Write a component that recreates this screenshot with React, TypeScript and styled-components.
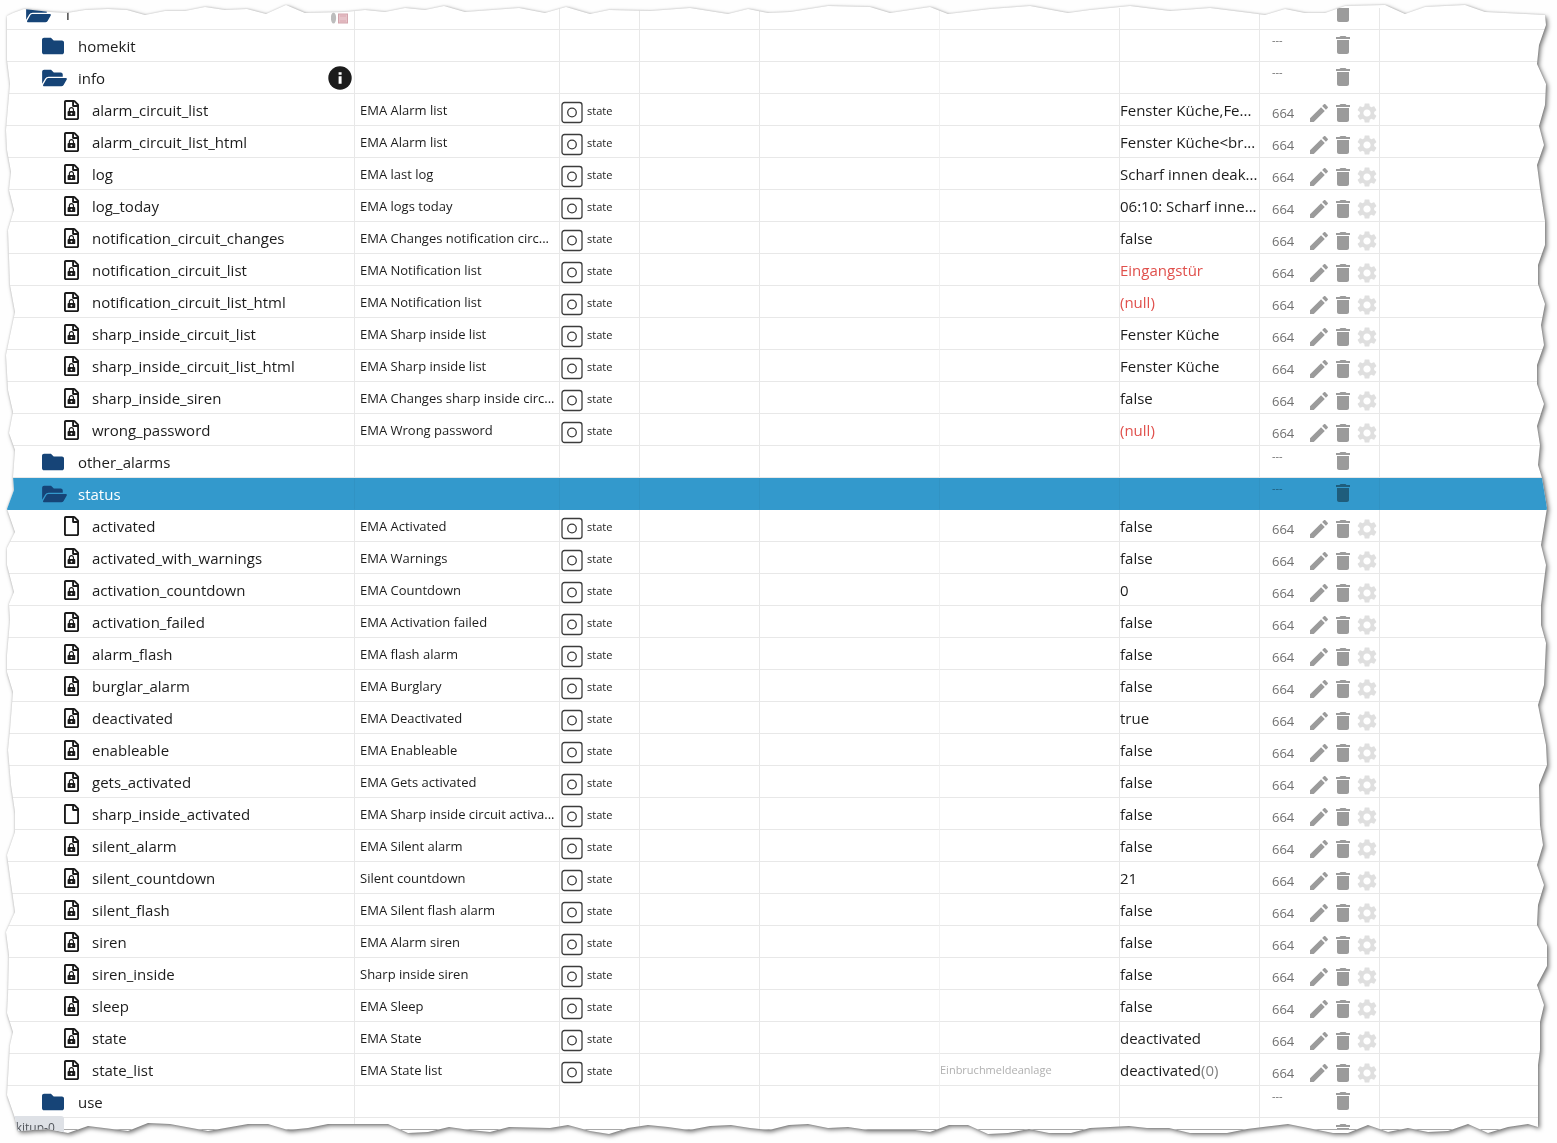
import React from "react";
import styled, { createGlobalStyle, css } from "styled-components";

const GlobalStyle = createGlobalStyle`
  body {
    margin: 0;
    background: #fefefe;
    color: #1c1c1c;
    font-family: "Open Sans", "Noto Sans", sans-serif;
  }
`;

/* Torn paper outline: top/bottom x are spread over the width, sides keep their distance to the edge. */
type Point = [number, number];
const SPAN = 1557;
const TOP: Point[] = [
  [7, 16], [13, 13], [24, 9], [50, 12], [67, 13], [85, 10], [108, 9], [127, 10], [145, 15], [165, 11], [185, 11],
  [205, 7], [225, 10], [247, 9], [266, 14], [286, 5], [305, 13], [345, 12], [365, 10], [385, 12], [405, 8],
  [425, 10], [444, 6], [465, 12], [519, 8], [545, 13], [566, 7], [590, 14], [609, 10], [650, 11], [690, 8],
  [728, 14], [748, 9], [768, 13], [790, 12], [828, 6], [870, 7], [890, 13], [930, 7], [948, 14], [990, 9],
  [1030, 6], [1068, 13], [1090, 10], [1130, 6], [1170, 11], [1210, 8], [1250, 13], [1265, 15], [1285, 9],
  [1305, 13], [1325, 13], [1345, 6], [1385, 5], [1405, 14], [1425, 7], [1465, 5], [1485, 12], [1545, 15],
];
const RIGHT: Point[] = [
  [11, 25], [18, 45], [20, 64], [11, 84], [12, 105], [18, 126], [13, 145], [20, 165], [17, 188], [12, 221],
  [12, 245], [19, 265], [19, 284], [12, 304], [16, 325], [13, 345], [20, 365], [20, 384], [13, 404], [20, 426],
  [17, 445], [19, 465], [15, 478], [10, 508], [16, 545], [11, 565], [16, 605], [16, 625], [11, 643], [13, 685],
  [19, 705], [11, 745], [10, 765], [18, 785], [17, 825], [14, 845], [20, 865], [13, 885], [19, 905], [20, 925],
  [10, 945], [10, 966], [20, 985], [13, 1005], [17, 1022], [17, 1050], [19, 1065], [19, 1127],
];
const BOTTOM: Point[] = [
  [1528, 19], [1508, 16], [1488, 10], [1468, 19], [1448, 12], [1428, 11], [1408, 15], [1388, 11], [1368, 18],
  [1348, 10], [1333, 10], [1308, 15], [1288, 19], [1247, 14], [1227, 10], [1190, 10], [1169, 15], [1147, 15],
  [1129, 17], [1110, 16], [1090, 15], [1071, 10], [1049, 10], [1029, 14], [1008, 10], [988, 9], [968, 18],
  [949, 18], [930, 11], [915, 13], [868, 13], [848, 16], [828, 15], [808, 19], [789, 18], [769, 13], [750, 15],
  [731, 18], [710, 17], [689, 13], [668, 16], [648, 18], [628, 15], [609, 9], [590, 12], [568, 18], [550, 15],
  [509, 16], [490, 11], [470, 13], [449, 16], [428, 11], [408, 10], [388, 19], [328, 19], [308, 15], [288, 13],
  [268, 19], [248, 19], [208, 12], [170, 19], [148, 20], [128, 12], [88, 17], [68, 10], [48, 14], [18, 12],
];
const LEFT: Point[] = [
  [15, 1118], [7, 1095], [9, 1062], [10, 1045], [13, 1032], [7, 1013], [8, 995], [9, 955], [6, 932], [15, 912],
  [7, 855], [15, 832], [15, 812], [11, 785], [8, 750], [10, 730], [13, 692], [7, 672], [7, 655], [10, 620],
  [9, 604], [14, 592], [7, 565], [7, 548], [15, 532], [7, 509], [14, 490], [13, 477], [15, 450], [9, 433],
  [13, 412], [8, 390], [6, 355], [15, 312], [10, 285], [8, 230], [14, 210], [9, 190], [11, 172], [7, 150],
  [6, 130], [10, 84], [7, 60],
];
const along = (x: number) => `${((x / SPAN) * 100).toFixed(3)}%`;
const TORN_EDGE = [
  ...TOP.map(([x, y]) => `${along(x)} ${y}px`),
  ...RIGHT.map(([x, y]) => `calc(100% - ${x}px) ${y}px`),
  ...BOTTOM.map(([x, y]) => `${along(x)} calc(100% - ${y}px)`),
  ...LEFT.map(([x, y]) => `${x}px ${y}px`),
].join(", ");

const Shadow = styled.main`
  filter: drop-shadow(0 0 1px rgba(0, 0, 0, 0.18)) drop-shadow(2px 2px 2px rgba(0, 0, 0, 0.5));
`;

const Paper = styled.div`
  position: relative;
  overflow: hidden;
  padding-bottom: 13px;
  background: #fff;
  clip-path: polygon(${TORN_EDGE});
`;

const ObjectTable = styled.table`
  width: 100%;
  margin-top: -2px;
  table-layout: fixed;
  border-collapse: separate;
  border-spacing: 0;
  clip-path: inset(10px 0 0 0);
`;

const Col = styled.col<{ $width?: number }>`
  ${(p) => p.$width && css`width: ${p.$width}px;`}
`;

const Cell = styled.td<{ $faint?: boolean }>`
  box-sizing: border-box;
  padding: 0;
  border-right: 1px solid ${(p) => (p.$faint ? "rgba(0, 0, 0, 0.05)" : "rgba(0, 0, 0, 0.09)")};
  border-bottom: 1px solid rgba(0, 0, 0, 0.09);
  vertical-align: top;
  &:last-child {
    border-right: 0;
  }
`;

const Rights = styled.span<{ $folder?: boolean }>`
  box-sizing: border-box;
  flex: none;
  width: ${(p) => (p.$folder ? 71 : 47)}px;
  padding-left: 12px;
  color: #707070;
  font-size: ${(p) => (p.$folder ? 11 : 13)}px;
  line-height: ${(p) => (p.$folder ? 14 : 24)}px;
`;

const Row = styled.tr<{ $selected?: boolean; $cut?: boolean }>`
  height: ${(p) => (p.$cut ? 12 : 32)}px;
  ${(p) =>
    p.$selected &&
    css`
      background: #3399cc;
      color: #fff;
      ${Cell} {
        border-right-color: rgba(0, 0, 0, 0.04);
        border-bottom-color: transparent;
      }
      ${Rights} {
        color: #1f5c7a;
      }
    `}
  ${(p) =>
    p.$cut &&
    css`
      ${Cell} {
        border-bottom-color: #a8a8a8;
      }
    `}
`;

const NameBox = styled.div<{ $indent: number }>`
  display: flex;
  align-items: center;
  height: 31px;
  padding-left: ${(p) => p.$indent}px;
  font-size: 15px;
`;

const IconSlot = styled.span<{ $width: number }>`
  display: flex;
  flex: none;
  width: ${(p) => p.$width}px;
`;

const NameText = styled.span`
  flex: 1;
  line-height: 32px;
`;

const Trailing = styled.span<{ $end: number }>`
  display: flex;
  flex: none;
  padding-right: ${(p) => p.$end}px;
`;

const Description = styled.div`
  height: 31px;
  overflow: hidden;
  padding-left: 5px;
  font-size: 13px;
  line-height: 32px;
  text-overflow: ellipsis;
  white-space: nowrap;
`;

const TypeBox = styled.div`
  display: flex;
  align-items: center;
  gap: 4px;
  height: 26px;
  padding-top: 5px;
  font-size: 11px;
`;

const TypeText = styled.span`
  padding-bottom: 2px;
  line-height: 24px;
`;

const FunctionName = styled.div`
  color: #b0b0b0;
  font-size: 11px;
  line-height: 31px;
`;

const Value = styled.div<{ $alert?: boolean }>`
  height: 31px;
  overflow: hidden;
  color: ${(p) => (p.$alert ? "#e0504c" : "inherit")};
  font-size: 15px;
  line-height: 32px;
  text-overflow: ellipsis;
  white-space: nowrap;
`;

const Raw = styled.span`
  color: #808080;
`;

const Actions = styled.div<{ $folder?: boolean }>`
  display: flex;
  height: 24px;
  padding-top: ${(p) => (p.$folder ? 3 : 7)}px;
`;

const IconButton = styled.button<{ $disabled?: boolean }>`
  flex: none;
  width: 24px;
  height: 24px;
  padding: 0;
  border: 0;
  background: none;
  color: #000;
  opacity: ${(p) => (p.$disabled ? 0.12 : 0.39)};
`;

const Glyph = styled.svg`
  display: block;
  flex: none;
`;

const LinkHint = styled.div`
  position: absolute;
  bottom: 0;
  left: 0;
  box-sizing: border-box;
  width: 64px;
  height: 27px;
  padding-left: 10px;
  overflow: hidden;
  border-radius: 0 3px 0 0;
  background: #dee1e6;
  color: #50545a;
  font-size: 12px;
  line-height: 24px;
  white-space: nowrap;
`;

const CutContent = styled.div`
  height: 11px;
  overflow: hidden;
`;

const NAVY = "#164477";

const FolderIcon = () => (
  <Glyph width="22" height="22" viewBox="0 0 512 512" fill={NAVY}>
    <path d="M464 128H272l-64-64H48C21.49 64 0 85.49 0 112v288c0 26.51 21.49 48 48 48h416c26.51 0 48-21.49 48-48V176c0-26.51-21.49-48-48-48z" />
  </Glyph>
);

const FolderOpenIcon = () => (
  <Glyph width="25" height="22" viewBox="0 0 576 512" fill={NAVY}>
    <path d="M572.694 292.093L500.27 416.248A63.997 63.997 0 0 1 444.989 448H45.025c-18.523 0-30.064-20.093-20.731-36.093l72.424-124.155A64 64 0 0 1 152 256h399.964c18.523 0 30.064 20.093 20.73 36.093zM152 224h328v-48c0-26.51-21.49-48-48-48H272l-64-64H48C21.49 64 0 85.49 0 112v278.046l69.077-118.418C86.214 242.25 117.989 224 152 224z" />
  </Glyph>
);

const DocumentIcon = ({ locked }: { locked: boolean }) => (
  <Glyph width="15" height="20" viewBox="0 0 384 512" fill="#1a1a1a">
    <path d="M369.9 97.9L286 14C277 5 264.8-.1 252.1-.1H48C21.5 0 0 21.5 0 48v416c0 26.5 21.5 48 48 48h288c26.5 0 48-21.5 48-48V131.9c0-12.7-5.1-25-14.1-34zM332.1 128H256V51.9l76.1 76.1zM48 464V48h160v104c0 13.3 10.7 24 24 24h104v288H48z" />
    {locked && (
      <path
        fillRule="evenodd"
        d="M122 282v-30c0-42 28-74 68-74s68 32 68 74v30h8c14 0 22 8 22 22v86c0 14-8 22-22 22H114c-14 0-22-8-22-22v-86c0-14 8-22 22-22zm30 0h76v-28c0-26-15-44-38-44s-38 18-38 44zM190 324a22 22 0 1 0 .1 0z"
      />
    )}
  </Glyph>
);

const StateIcon = () => (
  <Glyph width="23" height="23" viewBox="0 0 23 23" fill="none" stroke="#3c3c3c" strokeWidth="1.3">
    <rect x="2" y="1.5" width="20" height="20" rx="2.5" />
    <circle cx="12" cy="11.5" r="4.3" />
  </Glyph>
);

const InfoIcon = () => (
  <Glyph width="24" height="24" viewBox="0 0 24 24">
    <circle cx="12" cy="12" r="11.7" fill="#1c1c1c" />
    <path d="M10.6 6.2h3v2.6h-3zM10.6 10.2h3v7.6h-3z" fill="#fff" />
  </Glyph>
);

const UserIcon = () => (
  <Glyph width="17" height="22" viewBox="0 -8 17 22">
    <ellipse cx="2.5" cy="7" rx="2.6" ry="5.5" fill="#bdbdbd" />
    <rect x="7.5" y="3" width="9" height="9" fill="#e6c3c9" stroke="#d3a3ab" />
    <path d="M9 5h6M9 10h6" stroke="#dba9b2" />
  </Glyph>
);

const PATHS = {
  edit: "M3 17.25V21h3.75L17.81 9.94l-3.75-3.75L3 17.25zM20.71 7.04c.39-.39.39-1.02 0-1.41l-2.34-2.34c-.39-.39-1.02-.39-1.41 0l-1.83 1.83 3.75 3.75 1.83-1.83z",
  remove: "M6 19c0 1.1.9 2 2 2h8c1.1 0 2-.9 2-2V7H6v12zM19 4h-3.5l-1-1h-5l-1 1H5v2h14V4z",
  settings:
    "M19.14 12.94c.04-.3.06-.61.06-.94 0-.32-.02-.64-.07-.94l2.03-1.58c.18-.14.23-.41.12-.61l-1.92-3.32c-.12-.22-.37-.29-.59-.22l-2.39.96c-.5-.38-1.03-.7-1.62-.94l-.36-2.54c-.04-.24-.24-.41-.48-.41h-3.84c-.24 0-.43.17-.47.41l-.36 2.54c-.59.24-1.13.57-1.62.94l-2.39-.96c-.22-.08-.47 0-.59.22L2.74 8.87c-.12.21-.08.47.12.61l2.03 1.58c-.05.3-.09.63-.09.94s.02.64.07.94l-2.03 1.58c-.18.14-.23.41-.12.61l1.92 3.32c.12.22.37.29.59.22l2.39-.96c.5.38 1.03.7 1.62.94l.36 2.54c.05.24.24.41.48.41h3.84c.24 0 .44-.17.47-.41l.36-2.54c.59-.24 1.13-.56 1.62-.94l2.39.96c.22.08.47 0 .59-.22l1.92-3.32c.12-.22.07-.47-.12-.61l-2.01-1.58zM12 15.6c-1.98 0-3.6-1.62-3.6-3.6s1.62-3.6 3.6-3.6 3.6 1.62 3.6 3.6-1.62 3.6-3.6 3.6z",
};

const Action = ({ kind, label, disabled }: { kind: keyof typeof PATHS; label: string; disabled?: boolean }) => (
  <IconButton type="button" aria-label={label} $disabled={disabled}>
    <Glyph width="24" height="24" viewBox="0 0 24 24" fill="currentColor">
      <path d={PATHS[kind]} />
    </Glyph>
  </IconButton>
);

type Folder = { folder: string; open?: boolean; selected?: boolean; info?: boolean };
type State = { id: string; desc: string; value: string; alert?: boolean; writable?: boolean; fn?: string; raw?: string };

const ENTRIES: (Folder | State)[] = [
  { folder: "homekit" },
  { folder: "info", open: true, info: true },
  { id: "alarm_circuit_list", desc: "EMA Alarm list", value: "Fenster Küche,Fe..." },
  { id: "alarm_circuit_list_html", desc: "EMA Alarm list", value: "Fenster Küche<br..." },
  { id: "log", desc: "EMA last log", value: "Scharf innen deak..." },
  { id: "log_today", desc: "EMA logs today", value: "06:10: Scharf inne..." },
  { id: "notification_circuit_changes", desc: "EMA Changes notification circ...", value: "false" },
  { id: "notification_circuit_list", desc: "EMA Notification list", value: "Eingangstür", alert: true },
  { id: "notification_circuit_list_html", desc: "EMA Notification list", value: "(null)", alert: true },
  { id: "sharp_inside_circuit_list", desc: "EMA Sharp inside list", value: "Fenster Küche" },
  { id: "sharp_inside_circuit_list_html", desc: "EMA Sharp inside list", value: "Fenster Küche" },
  { id: "sharp_inside_siren", desc: "EMA Changes sharp inside circ...", value: "false" },
  { id: "wrong_password", desc: "EMA Wrong password", value: "(null)", alert: true },
  { folder: "other_alarms" },
  { folder: "status", open: true, selected: true },
  { id: "activated", desc: "EMA Activated", value: "false", writable: true },
  { id: "activated_with_warnings", desc: "EMA Warnings", value: "false" },
  { id: "activation_countdown", desc: "EMA Countdown", value: "0" },
  { id: "activation_failed", desc: "EMA Activation failed", value: "false" },
  { id: "alarm_flash", desc: "EMA flash alarm", value: "false" },
  { id: "burglar_alarm", desc: "EMA Burglary", value: "false" },
  { id: "deactivated", desc: "EMA Deactivated", value: "true" },
  { id: "enableable", desc: "EMA Enableable", value: "false" },
  { id: "gets_activated", desc: "EMA Gets activated", value: "false" },
  { id: "sharp_inside_activated", desc: "EMA Sharp inside circuit activa...", value: "false", writable: true },
  { id: "silent_alarm", desc: "EMA Silent alarm", value: "false" },
  { id: "silent_countdown", desc: "Silent countdown", value: "21" },
  { id: "silent_flash", desc: "EMA Silent flash alarm", value: "false" },
  { id: "siren", desc: "EMA Alarm siren", value: "false" },
  { id: "siren_inside", desc: "Sharp inside siren", value: "false" },
  { id: "sleep", desc: "EMA Sleep", value: "false" },
  { id: "state", desc: "EMA State", value: "deactivated" },
  { id: "state_list", desc: "EMA State list", value: "deactivated", raw: "(0)", fn: "Einbruchmeldeanlage" },
  { folder: "use" },
];

const EmptyCells = () => (
  <>
    <Cell />
    <Cell />
    <Cell />
    <Cell $faint />
    <Cell />
    <Cell />
  </>
);

const FolderRow = ({ folder, open, selected, info }: Folder) => (
  <Row $selected={selected}>
    <Cell>
      <NameBox $indent={42}>
        <IconSlot $width={36}>{open ? <FolderOpenIcon /> : <FolderIcon />}</IconSlot>
        <NameText>{folder}</NameText>
        {info && <Trailing $end={2}><InfoIcon /></Trailing>}
      </NameBox>
    </Cell>
    <EmptyCells />
    <Cell>
      <Actions $folder>
        <Rights $folder>---</Rights>
        <Action kind="remove" label={`Delete ${folder}`} />
      </Actions>
    </Cell>
    <Cell />
  </Row>
);

const StateRow = ({ id, desc, value, alert, writable, fn, raw }: State) => (
  <Row>
    <Cell>
      <NameBox $indent={64}>
        <IconSlot $width={28}><DocumentIcon locked={!writable} /></IconSlot>
        <NameText>{id}</NameText>
      </NameBox>
    </Cell>
    <Cell><Description>{desc}</Description></Cell>
    <Cell>
      <TypeBox>
        <StateIcon />
        <TypeText>state</TypeText>
      </TypeBox>
    </Cell>
    <Cell />
    <Cell $faint />
    <Cell>{fn && <FunctionName>{fn}</FunctionName>}</Cell>
    <Cell><Value $alert={alert}>{value}{raw && <Raw>{raw}</Raw>}</Value></Cell>
    <Cell>
      <Actions>
        <Rights>664</Rights>
        <Action kind="edit" label={`Edit ${id}`} />
        <Action kind="remove" label={`Delete ${id}`} />
        <Action kind="settings" label={`Settings of ${id}`} disabled />
      </Actions>
    </Cell>
    <Cell />
  </Row>
);

export default function App() {
  return (
    <>
      <GlobalStyle />
      <Shadow>
        <Paper>
          <ObjectTable>
            <colgroup>
              {[355, 205, 80, 120, 180, 180, 140, 120].map((width, i) => (
                <Col key={i} $width={width} />
              ))}
              <Col />
            </colgroup>
            <tbody>
              <Row>
                <Cell>
                  <NameBox $indent={26}>
                    <IconSlot $width={40}><FolderOpenIcon /></IconSlot>
                    <NameText>l</NameText>
                    <Trailing $end={6}><UserIcon /></Trailing>
                  </NameBox>
                </Cell>
                <EmptyCells />
                <Cell>
                  <Actions $folder>
                    <Rights $folder />
                    <Action kind="remove" label="Delete instance" />
                  </Actions>
                </Cell>
                <Cell />
              </Row>
              {ENTRIES.map((entry) =>
                "folder" in entry ? <FolderRow key={entry.folder} {...entry} /> : <StateRow key={entry.id} {...entry} />
              )}
              <Row $cut>
                <Cell />
                <EmptyCells />
                <Cell>
                  <CutContent>
                    <Actions $folder>
                      <Rights $folder />
                      <Action kind="remove" label="Delete next" />
                    </Actions>
                  </CutContent>
                </Cell>
                <Cell />
              </Row>
            </tbody>
          </ObjectTable>
          <LinkHint>ckitup-0</LinkHint>
        </Paper>
      </Shadow>
    </>
  );
}
